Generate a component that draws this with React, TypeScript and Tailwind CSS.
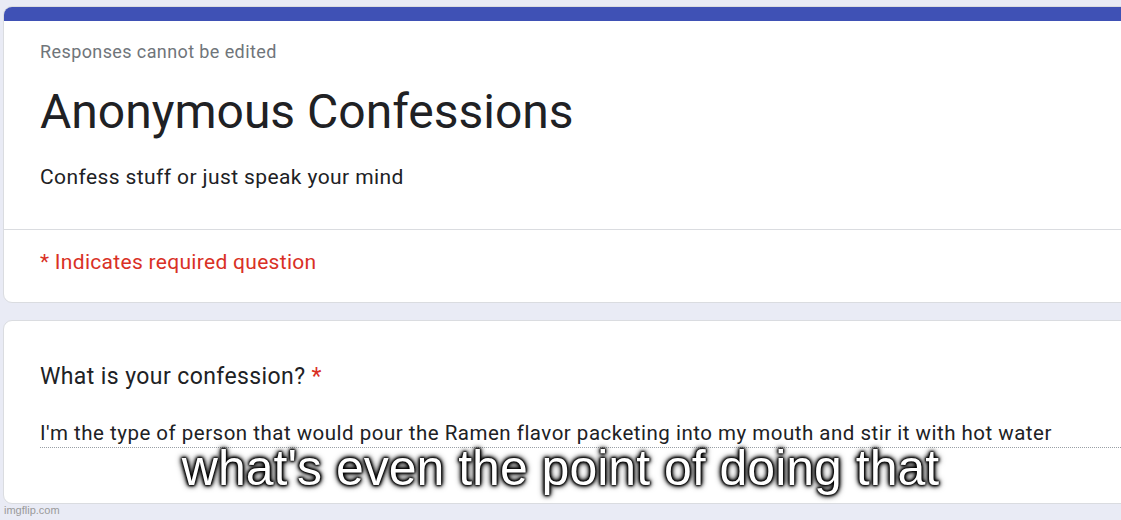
// Google Form confession card with meme caption overlay

export default function App() {
  return (
    <div className="relative h-[520px] w-[1121px] overflow-hidden bg-[#e9ebf5] font-['Roboto',sans-serif] text-[#202124]">
      <div className="flex w-[1150px] flex-col gap-[17px] pl-[3px] pt-[6px]">
        {/* Header card */}
        <div className="overflow-hidden rounded-[9px] border border-[#dadce0] bg-white">
          <div className="h-[14px] bg-[#3f51b5]"></div>
          <div className="px-[36px] pb-[38px] pt-[19px]">
            <p className="text-[18px] leading-[24px] tracking-[0.4px] text-[#70757a]">Responses cannot be edited</p>
            <h1 className="mt-[18px] text-[48px] leading-[60px]">Anonymous Confessions</h1>
            <p className="mt-[21px] text-[21px] leading-[28px] tracking-[0.4px]">Confess stuff or just speak your mind</p>
          </div>
          <div className="border-t border-[#dadce0] px-[36px] pb-[26px] pt-[18px]">
            <p className="text-[21px] leading-[28px] tracking-[0.3px] text-[#d93025]">* Indicates required question</p>
          </div>
        </div>

        {/* Question card */}
        <div className="rounded-[9px] border border-[#dadce0] bg-white pb-[55px] pl-[36px] pt-[41px]">
          <p className="text-[23px] leading-[30px] tracking-[0.4px]">
            What is your confession? <span className="text-[#d93025]">*</span>
          </p>
          <p className="mt-[27px] border-b border-dotted border-[#9aa0a6] text-[20.5px] leading-[28px] tracking-[0.5px]">
            I'm the type of person that would pour the Ramen flavor packeting into my mouth and stir it with hot water
          </p>
        </div>
      </div>

      {/* Meme caption */}
      <div className="absolute left-0 right-0 top-[439px] text-center font-['Liberation_Sans',Arial,sans-serif] text-[50px] leading-[58px] text-white [text-shadow:0_0_2px_#000,0_0_2px_#000,0_0_3px_#000,0_0_4px_#000,0_0_5px_#000,0_0_7px_#000]">
        what's even the point of doing that
      </div>

      {/* Watermark */}
      <div className="absolute bottom-[3px] left-[4px] font-['Liberation_Sans',Arial,sans-serif] text-[11px] leading-[13px] text-[#9a9a9a]">
        imgflip.com
      </div>
    </div>
  );
}
